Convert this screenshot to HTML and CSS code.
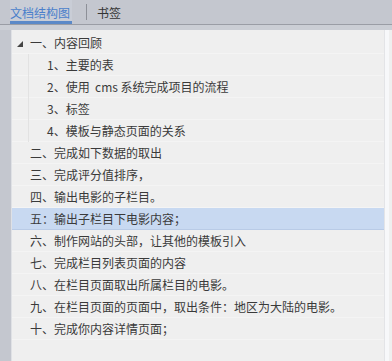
FILE: index.html
```html
<!DOCTYPE html>
<html lang="zh-CN">
<head>
    <meta charset="UTF-8">
    <title>文档结构图</title>
    <link rel="stylesheet" href="styles.css">
</head>
<body>
    <div class="tabs">
        <div class="tab active">文档结构图</div>
        <div class="tab-sep"></div>
        <div class="tab">书签</div>
    </div>
    <div class="tabs-line"></div>
    <div class="panel">
        <div class="outline">
            <div class="row level1">
                <svg class="toggle" width="6" height="6" viewBox="0 0 6 6"><polygon points="6,0 6,6 0,6" fill="#444"/></svg>
                一、内容回顾
            </div>
            <div class="children">
                <div class="row level2">1、主要的表</div>
                <div class="row level2">2、使用&nbsp;&nbsp;cms 系统完成项目的流程</div>
                <div class="row level2">3、标签</div>
                <div class="row level2">4、模板与静态页面的关系</div>
            </div>
            <div class="row level1">二、完成如下数据的取出</div>
            <div class="row level1">三、完成评分值排序，</div>
            <div class="row level1">四、输出电影的子栏目。</div>
            <div class="row level1 selected">五：输出子栏目下电影内容；</div>
            <div class="row level1">六、制作网站的头部，让其他的模板引入</div>
            <div class="row level1">七、完成栏目列表页面的内容</div>
            <div class="row level1">八、在栏目页面取出所属栏目的电影。</div>
            <div class="row level1">九、在栏目页面的页面中，取出条件：地区为大陆的电影。</div>
            <div class="row level1">十、完成你内容详情页面；</div>
        </div>
        <div class="scroll-edge"></div>
    </div>
</body>
</html>
```

FILE: styles.css
```css
body {
    margin: 0;
    width: 392px;
    height: 361px;
    overflow: hidden;
    background-color: #c4c7cf;
    font-family: "Noto Sans CJK SC", "Noto Sans", sans-serif;
    font-size: 12px;
    color: #3a3a3a;
}
.tabs {
    display: flex;
    align-items: stretch;
    height: 24px;
    padding-left: 10px;
}
.tab {
    display: flex;
    align-items: center;
    padding-top: 1px;
    color: #333;
}
.tab.active {
    width: 62px;
    color: #4a7fcb;
    background-color: #c9cdd6;
    border-bottom: 3px solid #5b89c8;
    box-sizing: border-box;
    padding-top: 3px;
}
.tab-sep {
    width: 1px;
    margin: 4px 10px 4px 14px;
    background-color: #8d9098;
}
.tabs-line {
    height: 1px;
    background-color: #9a9da5;
    border-bottom: 5px solid #cbced5;
}
.panel {
    display: flex;
    margin-left: 11px;
    height: 331px;
    border-left: 1px solid #dfe1e5;
    background-color: #efefef;
}
.outline {
    flex: 1;
    padding-top: 2px;
}
.row {
    display: flex;
    align-items: center;
    height: 21px;
    border-bottom: 1px solid #f4f4f4;
    white-space: nowrap;
}
.level1 {
    padding-left: 18px;
}
.level2 {
    padding-left: 35px;
}
.row.level1:first-child {
    padding-left: 5px;
}
.toggle {
    margin-right: 7px;
    margin-top: 2px;
}
.children {
    position: relative;
}
.children::before {
    content: "";
    position: absolute;
    left: 16px;
    top: 0;
    bottom: 0;
    width: 1px;
    background-color: #e2e2e2;
}
.selected {
    background-color: #c8d9f1;
    border-bottom-color: #b9cbe6;
}
.scroll-edge {
    width: 4px;
    background-color: #f7f8fa;
    border-left: 1px solid #e3e4e7;
    margin-right: 3px;
}
```
